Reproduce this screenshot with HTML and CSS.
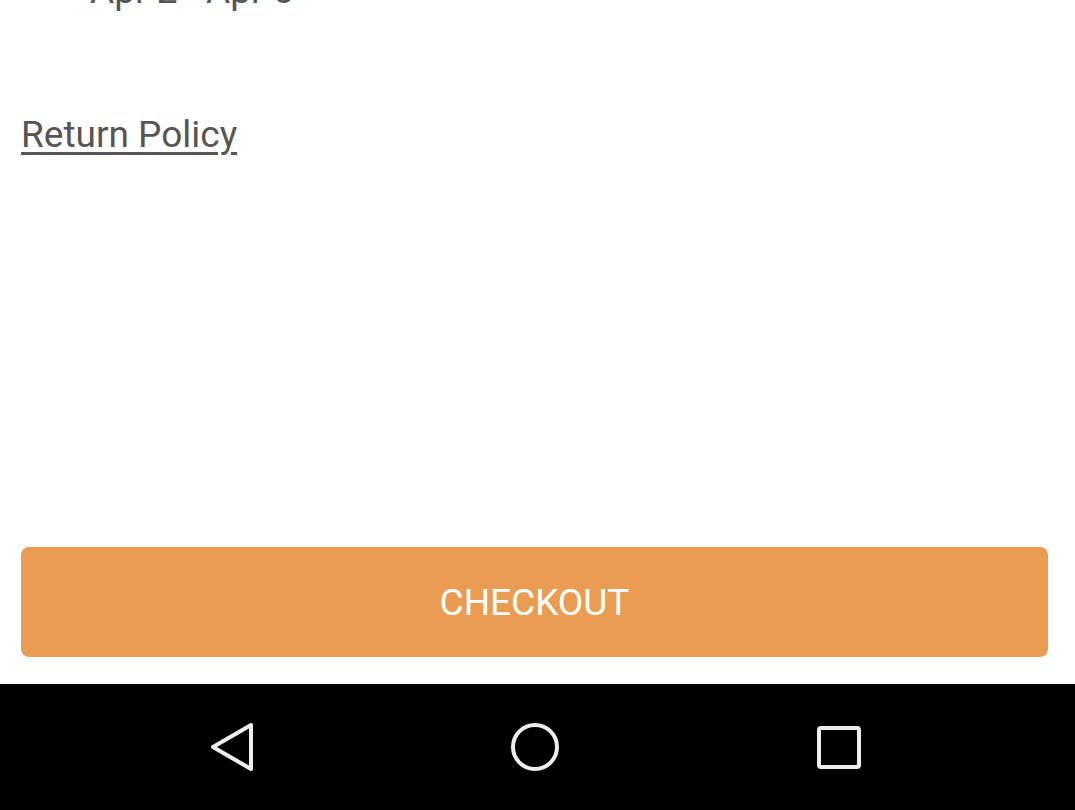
FILE: index.html
```html
<!DOCTYPE html>
<html>
<head>
<meta charset="utf-8">
<link rel="stylesheet" href="styles.css">
</head>
<body>
<div class="screen">
  <div class="content">
    <div class="dates">Apr 2 - Apr 5</div>
    <a class="policy" href="#">Return Policy</a>
    <div class="spacer"></div>
    <button class="checkout">CHECKOUT</button>
  </div>
  <nav class="navbar">
    <svg class="nav-icon" width="60" height="60" viewBox="0 0 60 60">
      <path d="M49 8 L49 52 L11 30 Z" fill="none" stroke="#eeeeee" stroke-width="4" stroke-linejoin="round"/>
    </svg>
    <svg class="nav-icon" width="60" height="60" viewBox="0 0 60 60">
      <circle cx="30" cy="30" r="22" fill="none" stroke="#eeeeee" stroke-width="4"/>
    </svg>
    <svg class="nav-icon" width="60" height="60" viewBox="0 0 60 60">
      <rect x="10" y="11" width="40" height="39" rx="2" fill="none" stroke="#eeeeee" stroke-width="4"/>
    </svg>
  </nav>
</div>
</body>
</html>
```
FILE: styles.css
```css
html, body {
  margin: 0;
  padding: 0;
  background: #ffffff;
}
.screen {
  width: 1075px;
  height: 810px;
  display: flex;
  flex-direction: column;
  overflow: hidden;
  font-family: Roboto, "Liberation Sans", sans-serif;
}
.content {
  flex: 1;
  display: flex;
  flex-direction: column;
  padding: 0 27px 27px 21px;
}
.dates {
  margin-top: -27px;
  padding-left: 69px;
  font-size: 37px;
  line-height: 36px;
  color: #555555;
}
.policy {
  margin-top: 105px;
  align-self: flex-start;
  font-size: 37px;
  line-height: 42px;
  color: #555555;
  text-decoration: underline;
  text-decoration-thickness: 3px;
  text-underline-offset: 5px;
}
.spacer {
  flex: 1;
}
.checkout {
  height: 110px;
  width: 100%;
  border: none;
  border-radius: 8px;
  background: #ea9d52;
  color: #ffffff;
  font-family: Roboto, "Liberation Sans", sans-serif;
  font-size: 37px;
  padding: 0;
}
.navbar {
  height: 126px;
  background: #000000;
  display: flex;
  align-items: center;
  padding-left: 202px;
}
.nav-icon {
  display: block;
  flex: none;
}
.navbar .nav-icon + .nav-icon {
  margin-left: 243px;
}
.navbar .nav-icon:nth-child(3) {
  margin-left: 244px;
}
```
